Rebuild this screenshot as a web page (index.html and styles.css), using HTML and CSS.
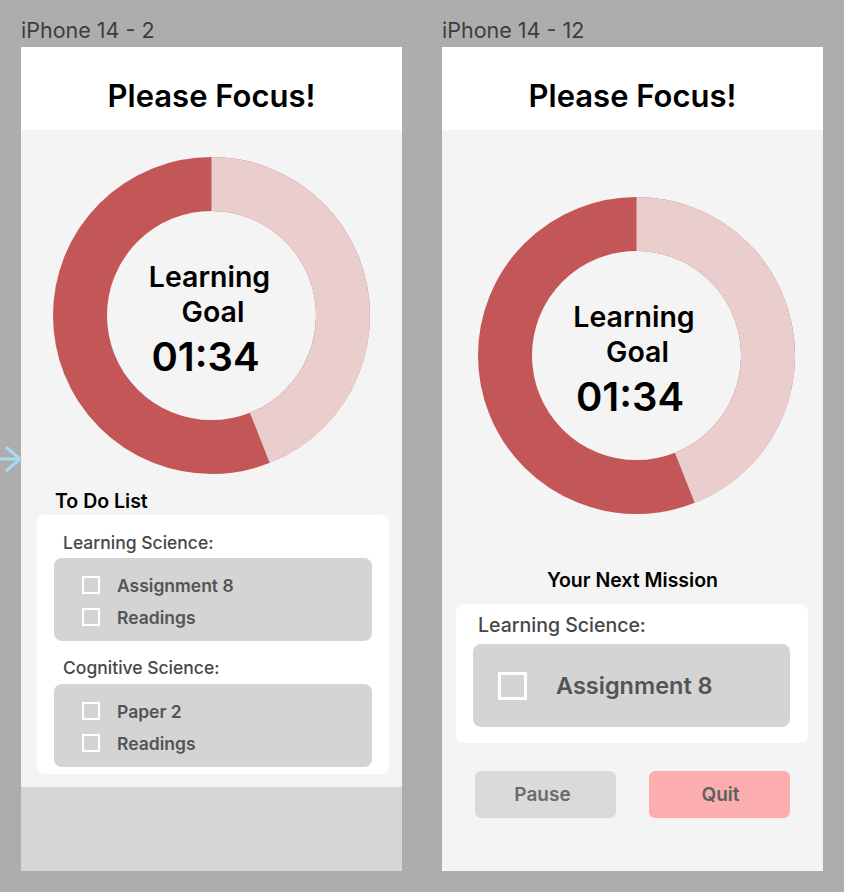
FILE: index.html
```html
<!DOCTYPE html>
<html lang="en">
<head>
<meta charset="utf-8">
<title>Please Focus!</title>
<link rel="stylesheet" href="styles.css">
</head>
<body>
<svg class="connector" width="24" height="30" viewBox="0 0 24 30"><path d="M0 15 H20 M6 3 L20 15 L6 27" fill="none" stroke="#a9d9f7" stroke-width="3"/></svg>
<div class="canvas">
  <section class="artboard">
    <div class="label">iPhone 14 - 2</div>
    <div class="phone">
      <header class="header"><h1>Please Focus!</h1></header>
      <div class="donut donut-a">
        <svg class="ring" width="317" height="317" viewBox="0 0 317 317">
          <circle cx="158.5" cy="158.5" r="131.5" fill="none" stroke="#c35657" stroke-width="54"/>
          <circle cx="158.5" cy="158.5" r="131.5" fill="none" stroke="#eacdcd" stroke-width="54" stroke-dasharray="363.5 900" transform="rotate(-90 158.5 158.5)"/>
        </svg>
        <div class="donut-text">
          <span class="dl1">Learning</span>
          <span class="dl2">Goal</span>
          <span class="dl3">01:34</span>
        </div>
      </div>
      <h2 class="section-title todo-title">To Do List</h2>
      <div class="card card-a">
        <div class="course">Learning Science:</div>
        <div class="tasks">
          <div class="task"><span class="box"></span><span>Assignment 8</span></div>
          <div class="task"><span class="box"></span><span>Readings</span></div>
        </div>
        <div class="course course-2">Cognitive Science:</div>
        <div class="tasks">
          <div class="task"><span class="box"></span><span>Paper 2</span></div>
          <div class="task"><span class="box"></span><span>Readings</span></div>
        </div>
      </div>
      <footer class="tabbar"></footer>
    </div>
  </section>
  <section class="artboard">
    <div class="label">iPhone 14 - 12</div>
    <div class="phone">
      <header class="header"><h1>Please Focus!</h1></header>
      <div class="donut donut-b">
        <svg class="ring" width="317" height="317" viewBox="0 0 317 317">
          <circle cx="158.5" cy="158.5" r="131.5" fill="none" stroke="#c35657" stroke-width="54"/>
          <circle cx="158.5" cy="158.5" r="131.5" fill="none" stroke="#eacdcd" stroke-width="54" stroke-dasharray="363.5 900" transform="rotate(-90 158.5 158.5)"/>
        </svg>
        <div class="donut-text">
          <span class="dl1">Learning</span>
          <span class="dl2">Goal</span>
          <span class="dl3">01:34</span>
        </div>
      </div>
      <h2 class="section-title mission-title">Your Next Mission</h2>
      <div class="card card-b">
        <div class="course course-lg">Learning Science:</div>
        <div class="mission">
          <span class="box box-lg"></span><span>Assignment 8</span>
        </div>
      </div>
      <div class="actions">
        <button class="btn btn-pause">Pause</button>
        <button class="btn btn-quit">Quit</button>
      </div>
    </div>
  </section>
</div>
</body>
</html>
```
FILE: styles.css
```css
* { box-sizing: border-box; }
html, body { margin: 0; padding: 0; }
body {
  background: #adadad;
  font-family: Inter, "Noto Sans", sans-serif;
  width: 844px;
  height: 892px;
  overflow: hidden;
  position: relative;
}
.connector {
  position: absolute;
  left: 0;
  top: 444px;
}
.canvas {
  display: flex;
  gap: 40px;
  padding: 18px 0 0 21px;
}
.artboard {
  width: 381px;
  display: flex;
  flex-direction: column;
}
.label {
  font-size: 21.5px;
  line-height: 24px;
  color: #3d3d3d;
  margin-bottom: 5px;
}
.phone {
  height: 824px;
  background: #f4f4f4;
  display: flex;
  flex-direction: column;
}
.header {
  height: 83px;
  background: #ffffff;
  display: flex;
  justify-content: center;
  padding-top: 30px;
}
.header h1 {
  margin: 0;
  font-size: 31px;
  line-height: 38px;
  font-weight: 600;
  color: #000;
}
.donut {
  display: grid;
  width: 317px;
  height: 317px;
  align-self: center;
}
.donut > * { grid-area: 1 / 1; }
.donut-a { margin-top: 27px; }
.donut-b { margin-top: 67px; margin-left: 7px; }
.donut-text {
  display: flex;
  flex-direction: column;
  align-items: center;
  justify-content: center;
  padding-top: 9px;
  color: #000;
}
.dl1 { font-size: 28.5px; line-height: 35px; font-weight: 600; margin-right: 4px; }
.dl2 { font-size: 28.5px; line-height: 35px; font-weight: 600; margin-left: 3px; }
.dl3 { font-size: 40px; line-height: 50px; font-weight: 600; margin-top: 3px; margin-right: 12px; }
.section-title {
  margin: 0;
  font-size: 19.5px;
  line-height: 22px;
  font-weight: 600;
  color: #000;
}
.todo-title { margin: 16px 0 3px 34px; }
.mission-title { margin: 55px 0 13px; text-align: center; }
.card {
  background: #ffffff;
  border-radius: 8px;
  width: 352px;
}
.card-a {
  margin-left: 16px;
  padding: 16px 17px 7px 17px;
}
.card-b {
  margin-left: 14px;
  height: 139px;
  padding: 9px 18px 16px 17px;
}
.course {
  font-size: 17.5px;
  line-height: 24px;
  font-weight: 500;
  color: #474747;
  padding-left: 9px;
  margin-bottom: 3px;
}
.course-2 { margin-top: 15px; margin-bottom: 4px; }
.course-lg {
  font-size: 19.5px;
  padding-left: 5px;
  margin-bottom: 7px;
}
.tasks {
  background: #d4d4d4;
  border-radius: 8px;
  padding: 11px 0 8px 28px;
}
.task {
  display: flex;
  align-items: center;
  gap: 17px;
  height: 32px;
  font-size: 17.5px;
  font-weight: 600;
  color: #545454;
}
.box {
  width: 18px;
  height: 18px;
  border: 2px solid #ffffff;
  flex: none;
}
.mission {
  background: #d4d4d4;
  border-radius: 8px;
  height: 83px;
  display: flex;
  align-items: center;
  gap: 29px;
  padding-left: 25px;
  font-size: 23.5px;
  font-weight: 600;
  color: #545454;
}
.box-lg {
  width: 29px;
  height: 28px;
  border-width: 3px;
}
.tabbar {
  margin-top: auto;
  height: 84px;
  background: #d6d6d6;
}
.actions {
  display: flex;
  gap: 33px;
  padding: 0 33px;
  margin-top: 28px;
}
.btn {
  flex: none;
  width: 141px;
  height: 47px;
  border: none;
  border-radius: 6px;
  font-family: inherit;
  font-size: 19px;
  font-weight: 600;
  padding: 0;
}
.btn-pause { background: #dadada; color: #6b6b6b; padding-right: 6px; }
.btn-quit { background: #fcaeae; color: #5f5f5f; padding-left: 2px; }
```
